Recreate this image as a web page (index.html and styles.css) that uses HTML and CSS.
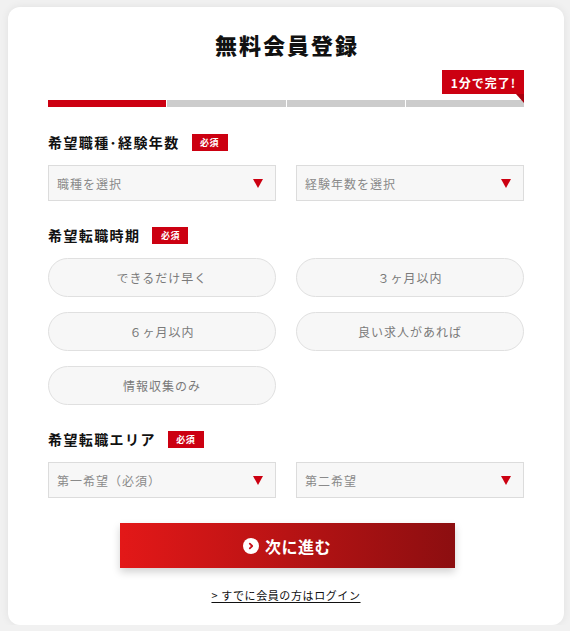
FILE: index.html
```html
<!DOCTYPE html>
<html lang="ja">
<head>
<meta charset="utf-8">
<title>無料会員登録</title>
<link rel="stylesheet" href="styles.css">
</head>
<body>
<main class="card">
  <h1 class="title">無料会員登録</h1>
  <div class="progress-head">
    <span class="quick">1分で完了!</span>
  </div>
  <div class="progress">
    <span class="seg on"></span><span class="seg"></span><span class="seg"></span><span class="seg"></span>
  </div>

  <section class="field f1">
    <div class="label"><span class="label-text">希望職種･経験年数</span><span class="req">必須</span></div>
    <div class="two">
      <div class="select"><span class="ph">職種を選択</span><span class="arrow"></span></div>
      <div class="select"><span class="ph">経験年数を選択</span><span class="arrow"></span></div>
    </div>
  </section>

  <section class="field">
    <div class="label"><span class="label-text">希望転職時期</span><span class="req">必須</span></div>
    <div class="pills">
      <div class="pill">できるだけ早く</div>
      <div class="pill">３ヶ月以内</div>
      <div class="pill">６ヶ月以内</div>
      <div class="pill">良い求人があれば</div>
      <div class="pill">情報収集のみ</div>
    </div>
  </section>

  <section class="field">
    <div class="label"><span class="label-text">希望転職エリア</span><span class="req">必須</span></div>
    <div class="two">
      <div class="select"><span class="ph">第一希望（必須）</span><span class="arrow"></span></div>
      <div class="select"><span class="ph">第二希望</span><span class="arrow"></span></div>
    </div>
  </section>

  <div class="actions">
    <button class="next" type="button">
      <svg class="next-icon" width="16" height="16" viewBox="0 0 16 16"><circle cx="8" cy="8" r="8" fill="#fff"/><path d="M6.8 5.6 L9.2 8 L6.8 10.4" fill="none" stroke="#c8101a" stroke-width="1.8" stroke-linecap="round" stroke-linejoin="round"/></svg>
      <span>次に進む</span>
    </button>
    <a class="login" href="#">&gt; すでに会員の方はログイン</a>
  </div>
</main>
</body>
</html>
```
FILE: styles.css
```css
* { box-sizing: border-box; }
html, body { margin: 0; }
body {
  background: #f1f1f1;
  padding: 7px 6px 0 8px;
  font-family: "Noto Sans CJK JP", "Noto Sans", sans-serif;
  color: #111;
}
.card {
  width: 556px;
  height: 618px;
  background: #fff;
  border-radius: 12px;
  box-shadow: 0 0 8px rgba(0,0,0,0.07);
  padding: 22px 40px 0 40px;
}
.title {
  margin: 0;
  font-size: 22px;
  line-height: 30px;
  font-weight: 900;
  letter-spacing: 2px;
  text-align: center;
  padding-left: 2px;
}
.progress-head {
  display: flex;
  justify-content: flex-end;
  margin-top: 11px;
}
.quick {
  position: relative;
  display: flex;
  align-items: center;
  justify-content: center;
  width: 82px;
  height: 24px;
  background: #cc0011;
  color: #fff;
  font-size: 12px;
  font-weight: 700;
  letter-spacing: 1px;
  padding-left: 1px;
}
.quick::after {
  content: "";
  position: absolute;
  right: 0;
  top: 24px;
  border-top: 9px solid #a8000e;
  border-left: 8px solid transparent;
  z-index: 2;
}
.progress {
  display: grid;
  grid-template-columns: repeat(4, 1fr);
  column-gap: 1px;
  margin-top: 6px;
  height: 7px;
}
.seg { background: #cccccc; }
.seg.on { background: #cc0011; }

.field { margin-top: 26px; }
.field.f1 { margin-top: 27px; }
.label {
  display: flex;
  align-items: center;
  height: 17px;
}
.label-text {
  font-size: 14px;
  font-weight: 700;
  letter-spacing: 1.4px;
  line-height: 17px;
}
.req {
  margin-left: 12px;
  width: 36px;
  height: 17px;
  background: #cc0011;
  color: #fff;
  font-size: 9px;
  font-weight: 700;
  display: flex;
  align-items: center;
  justify-content: center;
  letter-spacing: 0.5px;
}
.two {
  display: grid;
  grid-template-columns: 1fr 1fr;
  column-gap: 20px;
  margin-top: 14px;
}
.select {
  height: 36px;
  background: #f7f7f7;
  border: 1px solid #dcdcdc;
  display: flex;
  align-items: center;
  justify-content: space-between;
  padding: 0 12px 0 8px;
}
.ph {
  font-size: 12px;
  letter-spacing: 1px;
  color: #8a8a8a;
}
.arrow {
  width: 0;
  height: 0;
  border-left: 5.5px solid transparent;
  border-right: 5.5px solid transparent;
  border-top: 9px solid #cc0011;
  margin-top: 1px;
}
.pills {
  display: grid;
  grid-template-columns: 1fr 1fr;
  column-gap: 20px;
  row-gap: 15px;
  margin-top: 14px;
}
.pill {
  height: 39px;
  border-radius: 20px;
  background: #f7f7f7;
  border: 1px solid #e0e0e0;
  display: flex;
  align-items: center;
  justify-content: center;
  font-size: 12px;
  letter-spacing: 1px;
  color: #7a7a7a;
}
.actions {
  display: flex;
  flex-direction: column;
  align-items: center;
  margin-top: 25px;
}
.next {
  width: 335px;
  height: 45px;
  border: 0;
  margin: 0 0 0 2px;
  background: linear-gradient(to right, #e31818, #8c0e10);
  box-shadow: 0 4px 8px rgba(0,0,0,0.18);
  color: #fff;
  font-family: inherit;
  font-size: 16px;
  font-weight: 700;
  letter-spacing: 0.5px;
  display: flex;
  align-items: center;
  justify-content: center;
  gap: 6px;
  cursor: pointer;
}
.next-icon { display: block; }
.login {
  margin-top: 19px;
  font-size: 11px;
  line-height: 16px;
  letter-spacing: 0.6px;
  color: #111;
  text-decoration: underline;
  text-underline-offset: 2px;
}
```
